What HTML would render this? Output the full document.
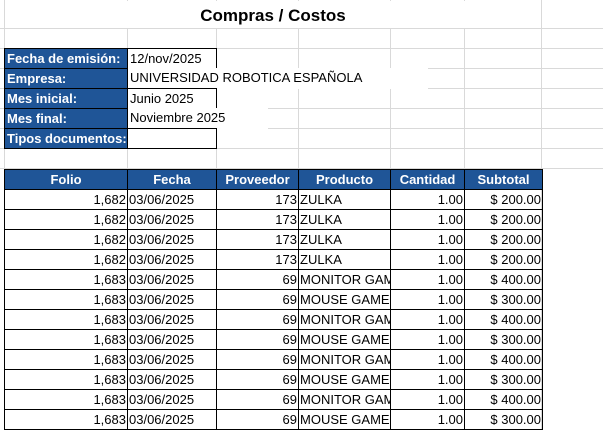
<!DOCTYPE html>
<html><head><style>
body{margin:0;width:603px;height:430px;overflow:hidden;background:#fff;font-family:"Liberation Sans",sans-serif;position:relative}
.gl{position:absolute;background:#d9d9d9}
.c{position:absolute;box-sizing:border-box;height:21px;font-size:13px;line-height:19px;white-space:nowrap;overflow:hidden;padding:0 2px}
.b{background:#1f5597;color:#fff;font-weight:bold;border:1px solid #000}
.w{border:1px solid #000;background:#fff}
table{position:absolute;left:4px;top:169px;width:538px;border-collapse:collapse;table-layout:fixed;font-size:13px}
td,th{border:1px solid #000;height:19px;padding:0 1px;white-space:nowrap;overflow:hidden;line-height:19px;text-overflow:clip}
th{background:#1f5597;color:#fff;font-weight:bold}
td.r{text-align:right}
</style></head><body>
<div class="gl" style="left:4px;top:0;width:1px;height:430px"></div>
<div class="gl" style="left:127px;top:0;width:1px;height:430px"></div>
<div class="gl" style="left:216px;top:0;width:1px;height:430px"></div>
<div class="gl" style="left:298px;top:0;width:1px;height:430px"></div>
<div class="gl" style="left:390px;top:0;width:1px;height:430px"></div>
<div class="gl" style="left:464px;top:0;width:1px;height:430px"></div>
<div class="gl" style="left:541px;top:0;width:1px;height:430px"></div>
<div class="gl" style="left:0;top:28px;width:603px;height:1px"></div>
<div class="gl" style="left:0;top:48px;width:603px;height:1px"></div>
<div class="gl" style="left:0;top:68px;width:603px;height:1px"></div>
<div class="gl" style="left:0;top:88px;width:603px;height:1px"></div>
<div class="gl" style="left:0;top:108px;width:603px;height:1px"></div>
<div class="gl" style="left:0;top:128px;width:603px;height:1px"></div>
<div class="gl" style="left:0;top:148px;width:603px;height:1px"></div>
<div class="gl" style="left:0;top:168px;width:603px;height:1px"></div>
<div style="position:absolute;left:5px;top:1px;width:536px;height:27px;background:#fff;text-align:center;font-weight:bold;font-size:17px;line-height:30px">Compras / Costos</div>
<div class="c b" style="left:4px;top:48px;width:124px">Fecha de emisión:</div>
<div class="c w" style="left:127px;top:48px;width:90px">12/nov/2025</div>
<div class="c b" style="left:4px;top:68px;width:124px">Empresa:</div>
<div class="c" style="left:128px;top:68px;width:300px;background:#fff">UNIVERSIDAD ROBOTICA ESPAÑOLA</div>
<div class="c b" style="left:4px;top:88px;width:124px">Mes inicial:</div>
<div class="c w" style="left:127px;top:88px;width:90px">Junio 2025</div>
<div class="c b" style="left:4px;top:108px;width:124px">Mes final:</div>
<div class="c" style="left:128px;top:108px;width:140px;background:#fff">Noviembre 2025</div>
<div class="c b" style="left:4px;top:128px;width:124px">Tipos documentos:</div>
<div class="c w" style="left:127px;top:128px;width:90px"></div>
<table>
<colgroup><col style="width:123px"><col style="width:89px"><col style="width:82px"><col style="width:92px"><col style="width:74px"><col style="width:78px"></colgroup>
<tr><th>Folio</th><th>Fecha</th><th>Proveedor</th><th>Producto</th><th>Cantidad</th><th>Subtotal</th></tr>
<tr><td class="r">1,682</td><td>03/06/2025</td><td class="r">173</td><td>ZULKA</td><td class="r">1.00</td><td class="r">$ 200.00</td></tr>
<tr><td class="r">1,682</td><td>03/06/2025</td><td class="r">173</td><td>ZULKA</td><td class="r">1.00</td><td class="r">$ 200.00</td></tr>
<tr><td class="r">1,682</td><td>03/06/2025</td><td class="r">173</td><td>ZULKA</td><td class="r">1.00</td><td class="r">$ 200.00</td></tr>
<tr><td class="r">1,682</td><td>03/06/2025</td><td class="r">173</td><td>ZULKA</td><td class="r">1.00</td><td class="r">$ 200.00</td></tr>
<tr><td class="r">1,683</td><td>03/06/2025</td><td class="r">69</td><td>MONITOR GAMER</td><td class="r">1.00</td><td class="r">$ 400.00</td></tr>
<tr><td class="r">1,683</td><td>03/06/2025</td><td class="r">69</td><td>MOUSE GAMER</td><td class="r">1.00</td><td class="r">$ 300.00</td></tr>
<tr><td class="r">1,683</td><td>03/06/2025</td><td class="r">69</td><td>MONITOR GAMER</td><td class="r">1.00</td><td class="r">$ 400.00</td></tr>
<tr><td class="r">1,683</td><td>03/06/2025</td><td class="r">69</td><td>MOUSE GAMER</td><td class="r">1.00</td><td class="r">$ 300.00</td></tr>
<tr><td class="r">1,683</td><td>03/06/2025</td><td class="r">69</td><td>MONITOR GAMER</td><td class="r">1.00</td><td class="r">$ 400.00</td></tr>
<tr><td class="r">1,683</td><td>03/06/2025</td><td class="r">69</td><td>MOUSE GAMER</td><td class="r">1.00</td><td class="r">$ 300.00</td></tr>
<tr><td class="r">1,683</td><td>03/06/2025</td><td class="r">69</td><td>MONITOR GAMER</td><td class="r">1.00</td><td class="r">$ 400.00</td></tr>
<tr><td class="r">1,683</td><td>03/06/2025</td><td class="r">69</td><td>MOUSE GAMER</td><td class="r">1.00</td><td class="r">$ 300.00</td></tr>
</table>
</body></html>
